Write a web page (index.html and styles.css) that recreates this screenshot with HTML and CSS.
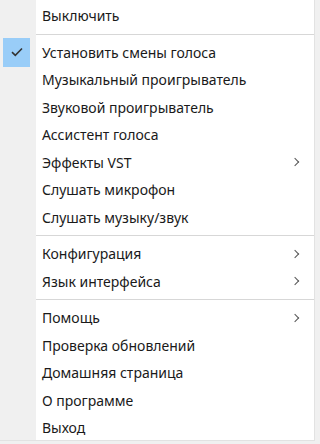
FILE: index.html
```html
<!DOCTYPE html>
<html lang="ru">
<head>
    <meta charset="UTF-8">
    <meta name="viewport" content="width=device-width, initial-scale=1.0">
    <title>Меню</title>
    <link rel="stylesheet" href="styles.css">
</head>
<body>
    <div class="menu">
        <div class="item"><span class="mark"></span><span class="label">Выключить</span></div>
        <div class="sep"></div>

        <div class="item">
            <span class="mark checked">
                <svg width="12" height="10" viewBox="0 0 12 10"><path d="M1 5.2 L4.3 8.3 L11 1.5" fill="none" stroke="#333" stroke-width="1.6"/></svg>
            </span>
            <span class="label">Установить смены голоса</span>
        </div>
        <div class="item"><span class="mark"></span><span class="label">Музыкальный проигрыватель</span></div>
        <div class="item"><span class="mark"></span><span class="label">Звуковой проигрыватель</span></div>
        <div class="item"><span class="mark"></span><span class="label">Ассистент голоса</span></div>
        <div class="item sub"><span class="mark"></span><span class="label">Эффекты VST</span><span class="arrow"></span></div>
        <div class="item"><span class="mark"></span><span class="label">Слушать микрофон</span></div>
        <div class="item"><span class="mark"></span><span class="label">Слушать музыку/звук</span></div>
        <div class="sep"></div>

        <div class="item sub"><span class="mark"></span><span class="label">Конфигурация</span><span class="arrow"></span></div>
        <div class="item sub"><span class="mark"></span><span class="label">Язык интерфейса</span><span class="arrow"></span></div>
        <div class="sep"></div>

        <div class="item sub"><span class="mark"></span><span class="label">Помощь</span><span class="arrow"></span></div>
        <div class="item"><span class="mark"></span><span class="label">Проверка обновлений</span></div>
        <div class="item"><span class="mark"></span><span class="label">Домашняя страница</span></div>
        <div class="item"><span class="mark"></span><span class="label">О программе</span></div>
        <div class="item"><span class="mark"></span><span class="label">Выход</span></div>
    </div>
</body>
</html>
```

FILE: styles.css
```css
body {
    margin: 0;
    background-color: #f0f0f0;
    font-family: "Noto Sans", "Open Sans", sans-serif;
    font-size: 14px;
    color: #1a1a1a;
}
.menu {
    width: 315px;
    height: 441px;
    box-sizing: border-box;
    padding-top: 2px;
    background: linear-gradient(to right, #f0f0f0 36px, #fff 36px);
    border-right: 1px solid #e2e2e2;
    border-bottom: 1px solid #e2e2e2;
}
.item {
    display: flex;
    align-items: center;
    height: 27.5px;
}
.mark {
    width: 36px;
    height: 100%;
    flex: none;
    display: flex;
    align-items: center;
}
.mark.checked {
    justify-content: center;
}
.mark.checked svg {
    display: block;
}
.checked {
    width: 27px;
    height: 29px;
    margin-left: 3px;
    margin-right: 6px;
    background-color: #99cdf8;
}
.label {
    flex: 1;
    padding-left: 6px;
    white-space: nowrap;
}
.arrow {
    width: 5px;
    height: 5px;
    margin-right: 16px;
    border-top: 1.5px solid #555;
    border-right: 1.5px solid #555;
    transform: rotate(45deg);
}
.sep {
    height: 9px;
    margin-left: 36px;
    display: flex;
    align-items: center;
}
.sep::after {
    content: "";
    flex: 1;
    height: 1px;
    background-color: #d7d7d7;
}
```
